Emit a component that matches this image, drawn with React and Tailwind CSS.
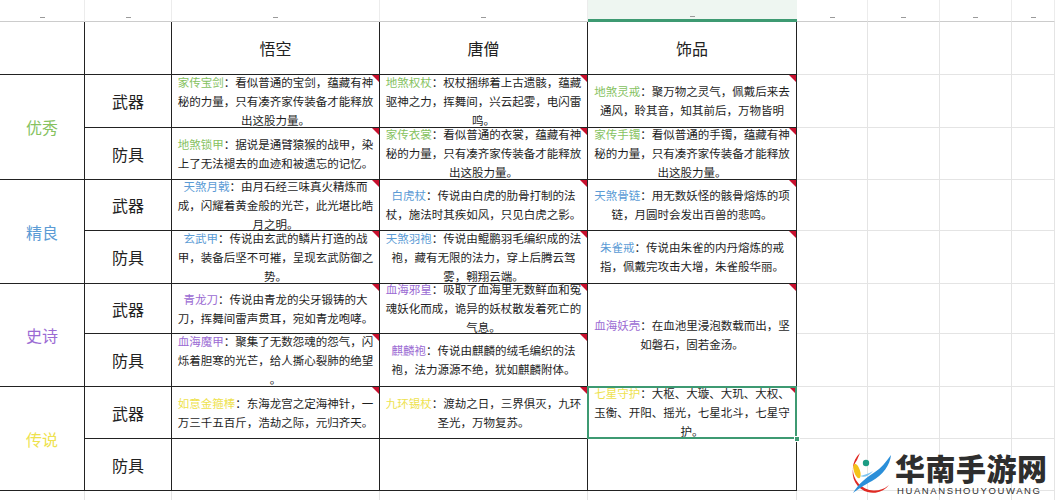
import React from 'react';

const tones = {
  green: 'text-[#86c25f]',
  blue: 'text-[#5b9bd5]',
  purple: 'text-[#9b6bd3]',
  yellow: 'text-[#eee24e]',
};

const groups = [
  {
    label: '优秀',
    tone: 'green',
    rows: [
      {
        type: '武器',
        cells: [
          { n: '家传宝剑', l: ['：看似普通的宝剑，蕴藏有神', '秘的力量，只有凑齐家传装备才能释放', '出这股力量。'] },
          { n: '地煞权杖', l: ['：权杖捆绑着上古遗骸，蕴藏', '驱神之力，挥舞间，兴云起雾，电闪雷', '鸣。'] },
          { n: '地煞灵戒', l: ['：聚万物之灵气，佩戴后来去', '通风，聆其音，知其前后，万物皆明'] },
        ],
      },
      {
        type: '防具',
        cells: [
          { n: '地煞锁甲', l: ['：据说是通臂猿猴的战甲，染', '上了无法褪去的血迹和被遗忘的记忆。'] },
          { n: '家传衣裳', l: ['：看似普通的衣裳，蕴藏有神', '秘的力量，只有凑齐家传装备才能释放', '出这股力量。'] },
          { n: '家传手镯', l: ['：看似普通的手镯，蕴藏有神', '秘的力量，只有凑齐家传装备才能释放', '出这股力量。'] },
        ],
      },
    ],
  },
  {
    label: '精良',
    tone: 'blue',
    rows: [
      {
        type: '武器',
        cells: [
          { n: '天煞月戟', l: ['：由月石经三味真火精炼而', '成，闪耀着黄金般的光芒，此光堪比皓', '月之明。'] },
          { n: '白虎杖', l: ['：传说由白虎的肋骨打制的法', '杖，施法时其疾如风，只见白虎之影。'] },
          { n: '天煞骨链', l: ['：用无数妖怪的骸骨熔炼的项', '链，月圆时会发出百兽的悲鸣。'] },
        ],
      },
      {
        type: '防具',
        cells: [
          { n: '玄武甲', l: ['：传说由玄武的鳞片打造的战', '甲，装备后坚不可摧，呈现玄武防御之', '势。'] },
          { n: '天煞羽袍', l: ['：传说由鲲鹏羽毛编织成的法', '袍，藏有无限的法力，穿上后腾云驾', '雾，翱翔云端。'] },
          { n: '朱雀戒', l: ['：传说由朱雀的内丹熔炼的戒', '指，佩戴完攻击大增，朱雀般华丽。'] },
        ],
      },
    ],
  },
  {
    label: '史诗',
    tone: 'purple',
    rows: [
      {
        type: '武器',
        cells: [
          { n: '青龙刀', l: ['：传说由青龙的尖牙锻铸的大', '刀，挥舞间雷声贯耳，宛如青龙咆哮。'] },
          { n: '血海邪皇', l: ['：吸取了血海里无数鲜血和冤', '魂妖化而成，诡异的妖杖散发着死亡的', '气息。'] },
          { n: '血海妖壳', l: ['：在血池里浸泡数载而出，坚', '如磐石，固若金汤。'], span: true },
        ],
      },
      {
        type: '防具',
        cells: [
          { n: '血海魔甲', l: ['：聚集了无数怨魂的怨气，闪', '烁着胆寒的光芒，给人撕心裂肺的绝望', '。'] },
          { n: '麒麟袍', l: ['：传说由麒麟的绒毛编织的法', '袍，法力源源不绝，犹如麒麟附体。'] },
        ],
      },
    ],
  },
  {
    label: '传说',
    tone: 'yellow',
    rows: [
      {
        type: '武器',
        cells: [
          { n: '如意金箍棒', l: ['：东海龙宫之定海神针，一', '万三千五百斤，浩劫之际，元归齐天。'] },
          { n: '九环锡杖', l: ['：渡劫之日，三界俱灭，九环', '圣光，万物复苏。'] },
          { n: '七星守护', l: ['：大枢、大璇、大玑、大权、', '玉衡、开阳、摇光，七星北斗，七星守', '护。'], selected: true },
        ],
      },
      { type: '防具', cells: [null, null, null] },
    ],
  },
];

const line = 'border-[#222]';

function Grey({ last }) {
  return <div className={last ? 'border-r border-[#e4e4e4]' : 'border-r border-b border-[#e4e4e4]'} />;
}

function Greys() {
  return (
    <>
      <Grey />
      <Grey />
      <Grey />
      <Grey />
    </>
  );
}

function Item({ cell, tone }) {
  if (!cell) return <div className={`border-r border-b ${line}`} />;
  return (
    <div
      className={`relative border-r border-b ${line} flex flex-col items-center justify-center text-center text-[11.5px] leading-[19px] text-[#1e1e1e] whitespace-nowrap ${cell.span ? 'row-span-2' : ''}`}
    >
      {cell.l.map((t, i) => (
        <div key={i}>
          {i === 0 && <span className={tones[tone]}>{cell.n}</span>}
          {t}
        </div>
      ))}
      <span className="absolute top-0 right-0 w-0 h-0 border-l-[7px] border-l-transparent border-t-[7px] border-t-[#c8102e]" />
      {cell.selected && (
        <>
          <span className="absolute -left-px -top-px -right-px -bottom-px border-2 border-[#3d9a72]" />
          <span className="absolute -right-[4px] -bottom-[4px] w-[6px] h-[6px] bg-[#3d9a72] border border-white" />
        </>
      )}
    </div>
  );
}

function Logo() {
  return (
    <div className="absolute left-[846px] top-[450px] flex items-center gap-[3px]">
      <svg width="46" height="46" viewBox="0 0 46 46">
        <path d="M14 3 A21 21 0 1 0 43 35 A18 18 0 0 1 11 10 Z" fill="#e02a23" />
        <ellipse cx="11" cy="21" rx="3" ry="7.5" transform="rotate(-18 11 21)" fill="#f4c21a" />
        <circle cx="20" cy="13" r="3.2" fill="#1b9c84" />
        <path d="M7 43 C13 33 21 27 29 22 C35 18 40 12 45 5 C44 15 37 25 26 31 C18 35 11 40 7 43 Z" fill="#2b8fd9" />
        <path d="M14 26 C18 25 22 24 27 21 C23 26 18 28 14 26 Z" fill="#7cc4f0" />
      </svg>
      <div className="flex flex-col">
        <div className="text-[30px] leading-[32px] font-black text-[#2e2e2e] tracking-[0.5px] [font-family:'Noto_Sans_CJK_SC',sans-serif]">
          华南手游网
        </div>
        <div className="text-[9.5px] leading-[11px] tracking-[1.6px] text-[#2e2e2e] mt-[2px] ml-[2px] [font-family:'Liberation_Sans',sans-serif]">
          HUANANSHOUYOUWANG
        </div>
      </div>
    </div>
  );
}

export default function App() {
  return (
    <div className="relative w-[1055px] h-[500px] overflow-hidden bg-white [font-family:'Noto_Sans_CJK_SC',sans-serif]">
      <div className="grid grid-cols-[85px_87px_208px_208px_209px_71px_72px_72px_43px] grid-rows-[22px_53px_53px_52px_51px_53px_50px_53px_52px_52px_9px]">
        {/* column header strip */}
        {[0, 1, 2, 3, 4, 5, 6, 7, 8].map((i) => (
          <div
            key={i}
            className={
              i === 4
                ? 'bg-[#eef6f1] border-b-[3px] border-b-[#3d9a72] flex items-end justify-center pb-[2px]'
                : 'border-b border-[#cccccc] border-r border-r-[#ececec] flex items-end justify-center pb-[3px]'
            }
          >
            <span className="w-[5px] h-px bg-[#9a9a9a]" />
          </div>
        ))}

        {/* header row */}
        <div className={`border-r border-b ${line}`} />
        <div className={`border-r border-b ${line}`} />
        {['悟空', '唐僧', '饰品'].map((h) => (
          <div key={h} className={`border-r border-b ${line} flex items-center justify-center text-[16px] text-[#222]`}>
            {h}
          </div>
        ))}
        <Greys />

        {groups.map((g) =>
          g.rows.map((r, ri) => (
            <React.Fragment key={g.label + ri}>
              {ri === 0 && (
                <div className={`row-span-2 border-r border-b ${line} flex items-center justify-center text-[16px] ${tones[g.tone]}`}>
                  {g.label}
                </div>
              )}
              <div className={`border-r border-b ${line} flex items-center justify-center text-[16px] text-[#222]`}>
                {r.type}
              </div>
              {r.cells.map((c, ci) => (
                <Item key={ci} cell={c} tone={g.tone} />
              ))}
              <Greys />
            </React.Fragment>
          ))
        )}

        {/* partial row below */}
        {[0, 1, 2, 3, 4, 5, 6, 7, 8].map((i) => (
          <Grey key={i} last />
        ))}
      </div>
      <Logo />
    </div>
  );
}
